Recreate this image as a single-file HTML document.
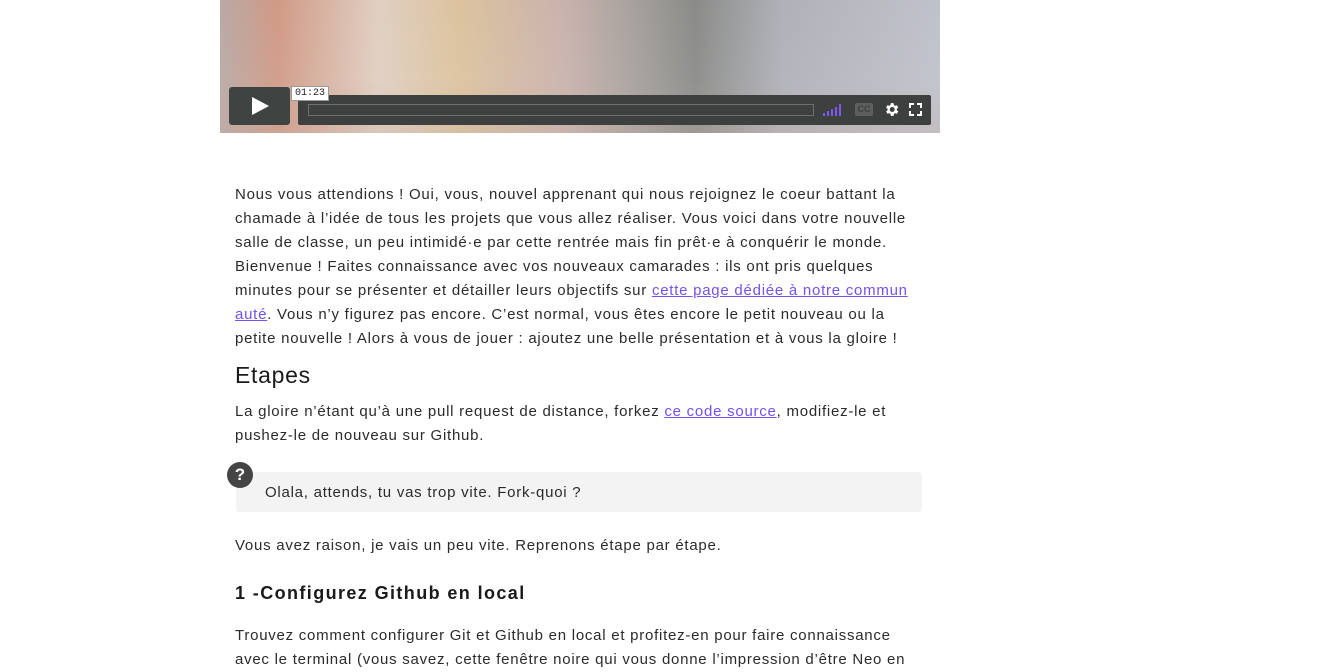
<!DOCTYPE html>
<html><head><meta charset="utf-8"><style>
body{margin:0;width:1324px;height:661px;overflow:hidden;background:#fff;font-family:"Liberation Sans",sans-serif;color:#222;}
.v{position:absolute;left:220px;top:0;width:720px;height:133px;overflow:hidden;
background:linear-gradient(90deg,#b9a9a6 0%,#d09a86 8%,#e0cfc2 22%,#dcc39e 33%,#c9b2ad 48%,#a8a29e 57%,#8a8b88 66%,#b0b1b8 78%,#c0c2cb 100%);}
.v:after{content:"";position:absolute;left:0;right:0;top:0;bottom:0;background:linear-gradient(180deg,rgba(255,255,255,0) 0%,rgba(255,255,255,.05) 60%,rgba(200,180,170,.3) 100%);}
.play{position:absolute;left:229px;top:87px;width:61px;height:38px;background:#3f4341;border-radius:3px;z-index:2}
.play:before{content:"";position:absolute;left:23px;top:10px;border-left:17px solid #fff;border-top:9px solid transparent;border-bottom:9px solid transparent}
.bar{position:absolute;left:298px;top:95px;width:633px;height:30px;background:#3d403f;border-radius:2px;z-index:2}
.track{position:absolute;left:10px;top:9px;width:504px;height:10px;border:1px solid #6c706e}
.tip{position:absolute;left:291px;top:86px;background:#fff;font:10px "Liberation Mono",monospace;padding:1px 3px;color:#222;z-index:3;border:1px solid #999}
.t{position:absolute;left:235px;font-size:15px;line-height:24px;letter-spacing:.75px;white-space:nowrap;color:#2b2b2b}
a{color:#7451eb;text-decoration:underline}
.box{position:absolute;left:236px;top:472px;width:686px;height:40px;background:#f3f3f3;border-radius:3px}
.q{position:absolute;left:227px;top:462px;width:26px;height:26px;border-radius:50%;background:#444;color:#fff;font-weight:bold;font-size:17px;text-align:center;line-height:26px}
</style></head><body>
<div class="v"></div>
<div class="play"></div>
<div class="bar"><div class="track"></div>
<svg style="position:absolute;left:524px;top:8px" width="22" height="14"><g fill="#7a5af0"><rect x="1" y="10" width="2" height="3"/><rect x="5" y="8" width="2" height="5"/><rect x="9" y="6" width="2" height="7"/><rect x="13" y="4" width="2" height="9"/><rect x="17" y="1" width="2" height="12"/></g></svg>
<div style="position:absolute;left:557px;top:8px;width:18px;height:13px;background:#5c5f5e;border-radius:2px;color:#3d403f;font:bold 9px 'Liberation Sans';text-align:center;line-height:13px">CC</div>
<svg style="position:absolute;left:585px;top:6px" width="17" height="17" viewBox="0 0 24 24"><path fill="#fff" d="M19.4 13a7.5 7.5 0 000-2l2.1-1.6-2-3.5-2.5 1a7 7 0 00-1.700-1L15 3h-4l-.4 2.9a7 7 0 00-1.7 1l-2.5-1-2 3.5L6.5 11a7.5 7.5 0 000 2l-2.1 1.6 2 3.5 2.5-1a7 7 0 001.7 1L11 21h4l.4-2.9a7 7 0 001.7-1l2.5 1 2-3.5zM13 15.5A3.5 3.5 0 1113 8.5a3.5 3.5 0 010 7z"/></svg>
<svg style="position:absolute;left:611px;top:8px" width="13" height="13" viewBox="0 0 13 13"><path fill="none" stroke="#fff" stroke-width="2" d="M1 5V1h4M8 1h4v4M12 8v4H8M5 12H1V8"/></svg>
</div>
<div class="tip">01:23</div>

<div class="t" style="top:183px">Nous vous attendions ! Oui, vous, nouvel apprenant qui nous rejoignez le coeur battant la</div>
<div class="t" style="top:207px">chamade à l’idée de tous les projets que vous allez réaliser. Vous voici dans votre nouvelle</div>
<div class="t" style="top:231px">salle de classe, un peu intimidé·e par cette rentrée mais fin prêt·e à conquérir le monde.</div>
<div class="t" style="top:255px">Bienvenue ! Faites connaissance avec vos nouveaux camarades : ils ont pris quelques</div>
<div class="t" style="top:279px">minutes pour se présenter et détailler leurs objectifs sur <a>cette page dédiée à notre commun</a></div>
<div class="t" style="top:303px"><a>auté</a>. Vous n’y figurez pas encore. C’est normal, vous êtes encore le petit nouveau ou la</div>
<div class="t" style="top:327px">petite nouvelle ! Alors à vous de jouer : ajoutez une belle présentation et à vous la gloire !</div>
<div class="t" style="top:359px;font-size:23px;line-height:32px;letter-spacing:.7px;color:#1a1a1a">Etapes</div>
<div class="t" style="top:400px">La gloire n’étant qu’à une pull request de distance, forkez <a>ce code source</a>, modifiez-le et</div>
<div class="t" style="top:424px">pushez-le de nouveau sur Github.</div>
<div class="box"></div>
<div class="q">?</div>
<div class="t" style="top:481px;left:265px">Olala, attends, tu vas trop vite. Fork-quoi ?</div>
<div class="t" style="top:534px">Vous avez raison, je vais un peu vite. Reprenons étape par étape.</div>
<div class="t" style="top:580px;font-size:18px;font-weight:bold;line-height:26px;letter-spacing:1.4px;color:#1a1a1a">1 -Configurez Github en local</div>
<div class="t" style="top:624px">Trouvez comment configurer Git et Github en local et profitez-en pour faire connaissance</div>
<div class="t" style="top:648px">avec le terminal (vous savez, cette fenêtre noire qui vous donne l’impression d’être Neo en</div>
</body></html>
